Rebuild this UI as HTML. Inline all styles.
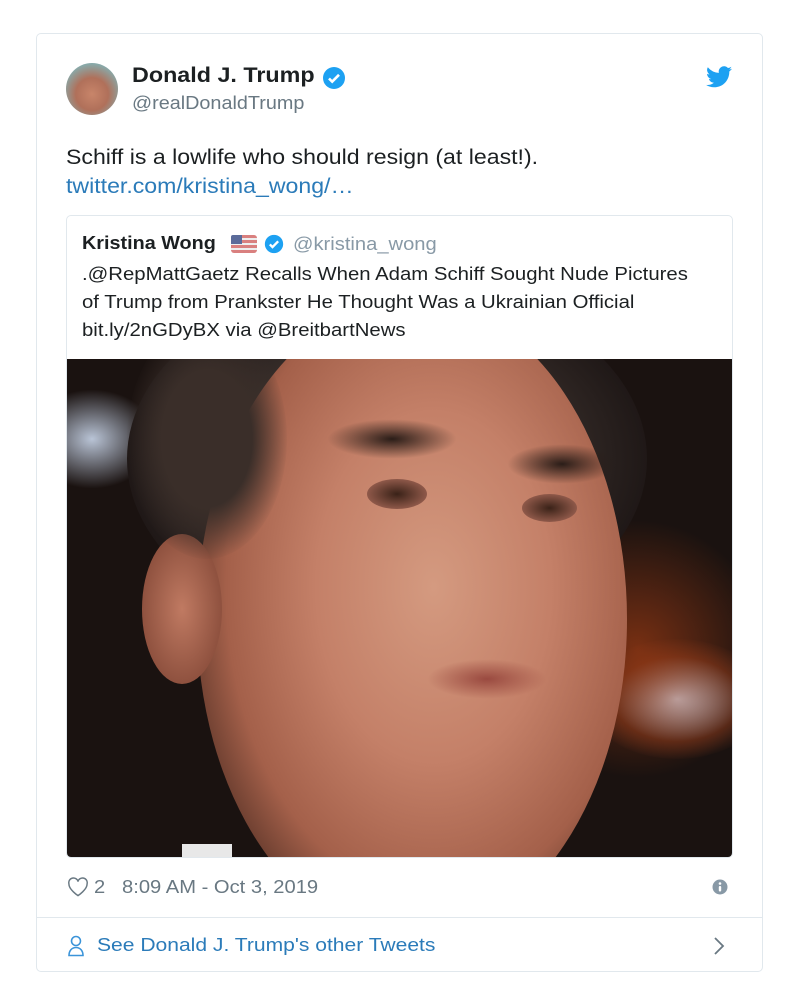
<!DOCTYPE html>
<html><head><meta charset="utf-8"><style>
*{box-sizing:border-box;margin:0;padding:0}
body{width:799px;height:1005px;background:#fff;font-family:"Liberation Sans",sans-serif;position:relative;overflow:hidden}
.card{position:absolute;left:36px;top:33px;width:727px;height:939px;border:1px solid #e1e8ed;border-radius:5px}
.abs{position:absolute;white-space:nowrap}
.sx{transform-origin:0 0}
.name{left:132px;top:64px;font-size:21px;font-weight:bold;color:#1c2022;transform:scaleX(1.11)}
.handle{left:132px;top:93px;font-size:18px;color:#697882;transform:scaleX(1.1)}
.txt{left:66px;top:143px;font-size:21px;color:#1c2022;line-height:29px;transform:scaleX(1.1)}
.link{color:#2b7bb9}
.quote{position:absolute;left:66px;top:215px;width:667px;height:643px;border:1px solid #e1e8ed;border-radius:5px;overflow:hidden}
.qt{font-size:18px;color:#1c2022;line-height:28px;transform:scaleX(1.13)}
.img{position:absolute;left:0;top:143px;width:667px;height:500px;background:#1a1210;overflow:hidden}
.img div{position:absolute;border-radius:50%}
</style></head><body>
<div class="card"></div>
<div class="abs" style="left:66px;top:63px;width:52px;height:52px;border-radius:50%;background:radial-gradient(circle at 50% 60%,#c8856a 0,#b0705a 40%,#8aa 75%,#6c8a98 100%)"></div>
<div class="abs sx name">Donald J. Trump</div>
<svg class="abs" style="left:322px;top:66px" width="24" height="24" viewBox="0 0 24 24"><circle cx="12" cy="12" r="11" fill="#1da1f2"/><path d="M7 12.5l3.2 3.2L17 8.8" stroke="#fff" stroke-width="2.6" fill="none"/></svg>
<div class="abs sx handle">@realDonaldTrump</div>
<svg class="abs" style="left:706px;top:66px" width="26" height="22" viewBox="0 0 24 20"><path fill="#1da1f2" d="M24 2.4c-.9.4-1.8.6-2.8.8 1-.6 1.8-1.6 2.2-2.7-1 .6-2 1-3.1 1.2A4.9 4.9 0 0 0 11.9 6.2 14 14 0 0 1 1.7 1 4.9 4.9 0 0 0 3.2 7.6c-.8 0-1.6-.2-2.2-.6 0 2.4 1.7 4.4 3.9 4.8-.7.2-1.5.2-2.2.1.6 2 2.4 3.4 4.6 3.4A9.9 9.9 0 0 1 0 17.3 14 14 0 0 0 7.5 19.5c9.1 0 14-7.5 14-14v-.6c1-.7 1.800-1.6 2.5-2.5z"/></svg>
<div class="abs sx txt">Schiff is a lowlife who should resign (at least!).<br><span class="link">twitter.com/kristina_wong/…</span></div>
<div class="quote">
 <div class="abs sx" style="left:15px;top:17px;font-size:18px;font-weight:bold;color:#1c2022;transform:scaleX(1.1)">Kristina Wong</div>
 <div class="abs" style="left:164px;top:19px;width:26px;height:18px;border-radius:3px;background:repeating-linear-gradient(#d9807f 0 3px,#eee 3px 5px)"><div style="width:11px;height:9px;background:#5b6b9a;border-radius:2px 0 0 0"></div></div>
 <svg class="abs" style="left:197px;top:18px" width="20" height="20" viewBox="0 0 24 24"><circle cx="12" cy="12" r="11" fill="#1da1f2"/><path d="M7 12.5l3.2 3.2L17 8.8" stroke="#fff" stroke-width="2.8" fill="none"/></svg>
 <div class="abs sx" style="left:226px;top:18px;font-size:18px;color:#8899a6;transform:scaleX(1.12)">@kristina_wong</div>
 <div class="abs sx qt" style="left:15px;top:44px">.@RepMattGaetz Recalls When Adam Schiff Sought Nude Pictures<br>of Trump from Prankster He Thought Was a Ukrainian Official<br>bit.ly/2nGDyBX via @BreitbartNews</div>
 <div class="img">
  <div style="left:-40px;top:30px;width:130px;height:100px;background:radial-gradient(#b9c4d6,rgba(80,90,110,0) 70%)"></div>
  <div style="left:520px;top:280px;width:180px;height:120px;background:radial-gradient(#c7cfe0 0,rgba(140,60,30,.5) 50%,rgba(0,0,0,0) 72%)"></div>
  <div style="left:440px;top:160px;width:260px;height:260px;background:radial-gradient(rgba(160,60,20,.7),rgba(0,0,0,0) 70%)"></div>
  <div style="left:60px;top:-80px;width:520px;height:360px;background:radial-gradient(#3a302c 40%,#1e1716 72%)"></div>
  <div style="left:130px;top:-60px;width:430px;height:640px;background:radial-gradient(ellipse at 55% 45%,#d49a80 0,#c48068 35%,#a4604a 62%,#4a2a20 82%)"></div>
  <div style="left:75px;top:175px;width:80px;height:150px;background:radial-gradient(#c07a62,#7a4030)"></div>
  <div style="left:60px;top:-40px;width:160px;height:240px;background:radial-gradient(#3a2e29 40%,rgba(30,23,22,0) 72%)"></div>
  <div style="left:260px;top:60px;width:130px;height:40px;background:radial-gradient(#2a1d18,rgba(100,60,50,0) 70%)"></div>
  <div style="left:440px;top:85px;width:110px;height:40px;background:radial-gradient(#2a1d18,rgba(100,60,50,0) 70%)"></div>
  <div style="left:300px;top:120px;width:60px;height:30px;background:radial-gradient(#3a2218,#9a6050 80%)"></div>
  <div style="left:455px;top:135px;width:55px;height:28px;background:radial-gradient(#3a2218,#9a6050 80%)"></div>
  <div style="left:360px;top:300px;width:120px;height:40px;background:radial-gradient(#9a4a40,rgba(180,110,90,0) 70%)"></div>
  <div style="left:115px;top:485px;width:50px;height:20px;background:#e8e8e8;border-radius:0"></div>
 </div>
</div>
<svg class="abs" style="left:67px;top:877px" width="22" height="20" viewBox="0 0 24 22"><path d="M12 20.5S2 14 2 7.5A5 5 0 0 1 12 5a5 5 0 0 1 10 2.5C22 14 12 20.5 12 20.5z" fill="none" stroke="#697882" stroke-width="1.6"/></svg>
<div class="abs sx" style="left:94px;top:877px;font-size:18px;color:#697882;transform:scaleX(1.12)">2&nbsp;&nbsp; 8:09 AM - Oct 3, 2019</div>
<svg class="abs" style="left:712px;top:879px" width="16" height="16" viewBox="0 0 16 16"><circle cx="8" cy="8" r="7.5" fill="#8899a6"/><circle cx="8" cy="4.5" r="1.3" fill="#fff"/><rect x="6.8" y="7" width="2.4" height="5.5" rx="1" fill="#fff"/></svg>
<div class="abs" style="left:37px;top:917px;width:725px;height:1px;background:#e1e8ed"></div>
<svg class="abs" style="left:66px;top:934px" width="20" height="24" viewBox="0 0 20 24"><circle cx="10" cy="7" r="4.5" fill="none" stroke="#3b94d9" stroke-width="1.6"/><path d="M3 21.5c0-5 3-8 7-8s7 3 7 8z" fill="none" stroke="#3b94d9" stroke-width="1.6"/></svg>
<div class="abs sx" style="left:97px;top:935px;font-size:18px;color:#2b7bb9;transform:scaleX(1.17)">See Donald J. Trump's other Tweets</div>
<svg class="abs" style="left:712px;top:935px" width="14" height="22" viewBox="0 0 14 22"><path d="M3 3l8 8-8 8" fill="none" stroke="#697882" stroke-width="1.8"/></svg>
</body></html>
